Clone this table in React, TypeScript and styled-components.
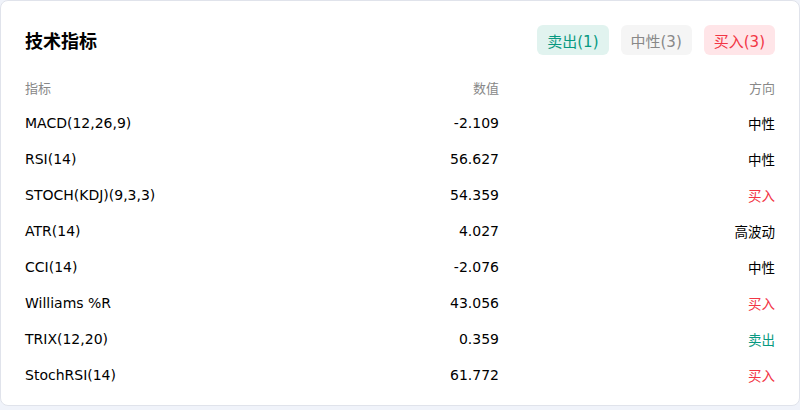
import React from "react";
import styled, { createGlobalStyle } from "styled-components";

const GlobalStyle = createGlobalStyle`
  html, body {
    margin: 0;
    padding: 0;
    background: #f0f3fa;
  }
  body {
    font-family: "DejaVu Sans", "Noto Sans CJK SC", sans-serif;
    color: #131722;
  }
`;

type Signal = "buy" | "sell" | "neutral" | "high";

const rows: { name: string; value: string; signal: Signal; label: string }[] = [
  { name: "MACD(12,26,9)", value: "-2.109", signal: "neutral", label: "中性" },
  { name: "RSI(14)", value: "56.627", signal: "neutral", label: "中性" },
  { name: "STOCH(KDJ)(9,3,3)", value: "54.359", signal: "buy", label: "买入" },
  { name: "ATR(14)", value: "4.027", signal: "high", label: "高波动" },
  { name: "CCI(14)", value: "-2.076", signal: "neutral", label: "中性" },
  { name: "Williams %R", value: "43.056", signal: "buy", label: "买入" },
  { name: "TRIX(12,20)", value: "0.359", signal: "sell", label: "卖出" },
  { name: "StochRSI(14)", value: "61.772", signal: "buy", label: "买入" },
];

const signalColor = (s: Signal) =>
  s === "buy" ? "#f23645" : s === "sell" ? "#089981" : "#000";

const Card = styled.section`
  box-sizing: border-box;
  width: 800px;
  height: 406px;
  background: #fff;
  border: 1px solid #e0e3eb;
  border-radius: 8px;
  padding: 24px 24px 12px 24px;
`;

const Header = styled.header`
  display: flex;
  align-items: center;
  justify-content: space-between;
  height: 30px;
`;

const Title = styled.h2`
  margin: 0;
  font-size: 18px;
  font-weight: 700;
  color: #000;
`;

const Badges = styled.div`
  display: flex;
  gap: 12px;
`;

const badgeTheme = {
  sell: { bg: "#e1f3ef", fg: "#089981" },
  neutral: { bg: "#f5f5f5", fg: "#888888" },
  buy: { bg: "#ffe5e8", fg: "#f23645" },
};

const Badge = styled.span<{ $kind: "sell" | "neutral" | "buy" }>`
  display: inline-flex;
  align-items: center;
  height: 30px;
  padding: 0 10px;
  border-radius: 6px;
  font-size: 15px;
  background: ${(p) => badgeTheme[p.$kind].bg};
  color: ${(p) => badgeTheme[p.$kind].fg};
`;

const Table = styled.div`
  margin-top: 14px;
  display: grid;
  grid-template-columns: 274px 200px 1fr;
  grid-auto-rows: 36px;
  align-items: center;
  font-size: 14px;
`;

const HeadCell = styled.div<{ $align?: "left" | "right" }>`
  color: #888888;
  font-size: 13px;
  text-align: ${(p) => p.$align || "left"};
`;

const NameCell = styled.div`
  color: #000;
`;

const ValueCell = styled.div`
  text-align: right;
  color: #000;
`;

const DirCell = styled.div<{ $signal: Signal }>`
  text-align: right;
  font-size: 13.5px;
  color: ${(p) => signalColor(p.$signal)};
`;

export default function App() {
  return (
    <>
      <GlobalStyle />
      <Card>
        <Header>
          <Title>技术指标</Title>
          <Badges>
            <Badge $kind="sell">卖出(1)</Badge>
            <Badge $kind="neutral">中性(3)</Badge>
            <Badge $kind="buy">买入(3)</Badge>
          </Badges>
        </Header>
        <Table>
          <HeadCell>指标</HeadCell>
          <HeadCell $align="right">数值</HeadCell>
          <HeadCell $align="right">方向</HeadCell>
          {rows.map((r) => (
            <React.Fragment key={r.name}>
              <NameCell>{r.name}</NameCell>
              <ValueCell>{r.value}</ValueCell>
              <DirCell $signal={r.signal}>{r.label}</DirCell>
            </React.Fragment>
          ))}
        </Table>
      </Card>
    </>
  );
}
